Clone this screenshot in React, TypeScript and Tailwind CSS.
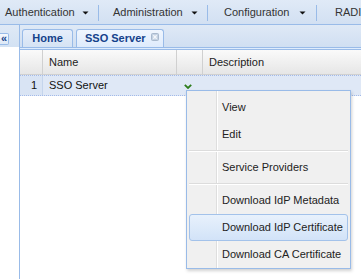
import React from "react";

function Caret({ className = "" }: { className?: string }) {
  return (
    <svg className={"shrink-0 " + className} width="7" height="4" viewBox="0 0 7 4">
      <polygon points="0.5,0.5 6.5,0.5 3.5,3.5" fill="#111" />
    </svg>
  );
}

function Sep() {
  return <div className="h-[16px] w-px shrink-0 bg-[#99bbe8]" />;
}

function MenuItem({ label, active = false }: { label: string; active?: boolean }) {
  return (
    <div
      className={
        "relative flex h-[27px] items-center pl-[32px] text-[#222] " +
        (active
          ? "rounded-[3px] border border-[#a3c2ea] bg-linear-to-b from-[#e8f1fc] to-[#d2e3f8]"
          : "border border-transparent")
      }
    >
      {label}
    </div>
  );
}

function MenuSep() {
  return (
    <div className="relative flex h-[6px] flex-col justify-center">
      <div className="h-px bg-[#dcdcdc]" />
      <div className="h-px bg-white" />
    </div>
  );
}

export default function App() {
  return (
    <div className="relative h-[279px] w-[361px] overflow-hidden bg-white font-['Liberation_Sans',Arial,sans-serif] text-[11px] leading-none">
      {/* top toolbar */}
      <div className="flex h-[25px] items-center overflow-hidden whitespace-nowrap border-b border-[#99bbe8] bg-linear-to-b from-[#e0eaf7] to-[#d2e0f2] pt-[1px] text-[#333]">
        <div className="flex w-[98px] shrink-0 items-center pl-[5px]">
          <span>Authentication</span>
          <Caret className="ml-[7px]" />
        </div>
        <Sep />
        <div className="flex w-[108px] shrink-0 items-center pl-[14px]">
          <span>Administration</span>
          <Caret className="ml-[8px]" />
        </div>
        <Sep />
        <div className="flex w-[108px] shrink-0 items-center pl-[16px]">
          <span>Configuration</span>
          <Caret className="ml-[10px]" />
        </div>
        <Sep />
        <div className="shrink-0 pl-[18px]">RADIUS</div>
      </div>

      <div className="flex h-[254px]">
        {/* collapsed west panel */}
        <div className="flex w-[20px] shrink-0 flex-col border-r border-[#99bbe8]">
          <div className="h-[22px] bg-linear-to-b from-[#dfe9f6] to-[#d3e2f3] pt-[8px]">
            <div className="flex h-[12px] w-[9px] items-center justify-center rounded-r-[2px] border border-l-0 border-[#99bbe8] bg-linear-to-b from-[#f6f9fd] to-[#dce8f6] pb-[1px] text-[11px] font-bold text-[#15428b]">
              «
            </div>
          </div>
          <div className="flex-1 bg-white" />
        </div>

        {/* main */}
        <div className="flex min-w-0 flex-1 flex-col">
          {/* tab strip */}
          <div className="flex h-[23px] items-end gap-[3px] border-b border-[#99bbe8] bg-linear-to-b from-[#dfe9f6] to-[#d0dff2] pl-[2px]">
            <div className="flex h-[18px] w-[51px] items-center justify-center rounded-t-[3px] border border-b-0 border-[#99bbe8] bg-linear-to-b from-[#e6eefa] to-[#d5e3f4] font-bold text-[#15428b]">
              Home
            </div>
            <div className="flex h-[18px] w-[88px] items-center rounded-t-[3px] border border-b-0 border-[#99bbe8] bg-linear-to-b from-[#f0f6fe] to-[#deebfc] pl-[8px] font-bold text-[#15428b]">
              <span>SSO Server</span>
              <svg className="ml-[5px] -mt-[4px]" width="8" height="8" viewBox="0 0 8 8">
                <rect x="0.5" y="0.5" width="7" height="7" rx="1" fill="#c4d2e3" stroke="#a9b9cd" />
                <path d="M2.3 2.3 L5.7 5.7 M5.7 2.3 L2.3 5.7" stroke="#f4f7fb" strokeWidth="1.3" />
              </svg>
            </div>
          </div>
          <div className="h-[2px] border-b border-[#99bbe8] bg-[#deecfd]" />

          {/* grid header */}
          <div className="flex h-[25px] border-b border-[#d0d0d0] bg-linear-to-b from-[#fafafa] to-[#e6e6e6] text-[#222]">
            <div className="w-[23px] border-r border-[#d0d0d0]" />
            <div className="flex w-[134px] items-center border-r border-[#d0d0d0] pl-[6px]">Name</div>
            <div className="w-[26px] border-r border-[#d0d0d0]" />
            <div className="flex flex-1 items-center pl-[6px]">Description</div>
          </div>

          {/* data row */}
          <div className="flex h-[21px] border-y border-dotted border-[#a3bae9] bg-[#dfe8f6] text-[#111]">
            <div className="flex w-[23px] items-center justify-end border-r border-[#c5d5ec] bg-[#d9e4f4] pr-[5px]">1</div>
            <div className="flex w-[134px] items-center pl-[6px]">SSO Server</div>
            <div className="flex w-[26px] items-start pl-[7px] pt-[8px]">
              <svg width="8" height="5" viewBox="0 0 8 5">
                <polyline points="0.8,0.8 4,4 7.2,0.8" fill="none" stroke="#2e7d1c" strokeWidth="1.8" />
              </svg>
            </div>
            <div className="flex-1" />
          </div>
        </div>
      </div>

      {/* context menu */}
      <div className="absolute left-[186px] top-[90px] h-[179px] w-[165px] border border-[#99bbe8] bg-[#f0f0f0] px-[2px] pt-[3px] shadow-[1px_2px_3px_rgba(0,0,0,0.18)]">
        <div className="absolute bottom-0 left-[29px] top-0 w-px bg-[#dedede]" />
        <div className="absolute bottom-0 left-[30px] top-0 w-px bg-white" />
        <MenuItem label="View" />
        <MenuItem label="Edit" />
        <MenuSep />
        <MenuItem label="Service Providers" />
        <MenuSep />
        <MenuItem label="Download IdP Metadata" />
        <MenuItem label="Download IdP Certificate" active />
        <MenuItem label="Download CA Certificate" />
      </div>
    </div>
  );
}
